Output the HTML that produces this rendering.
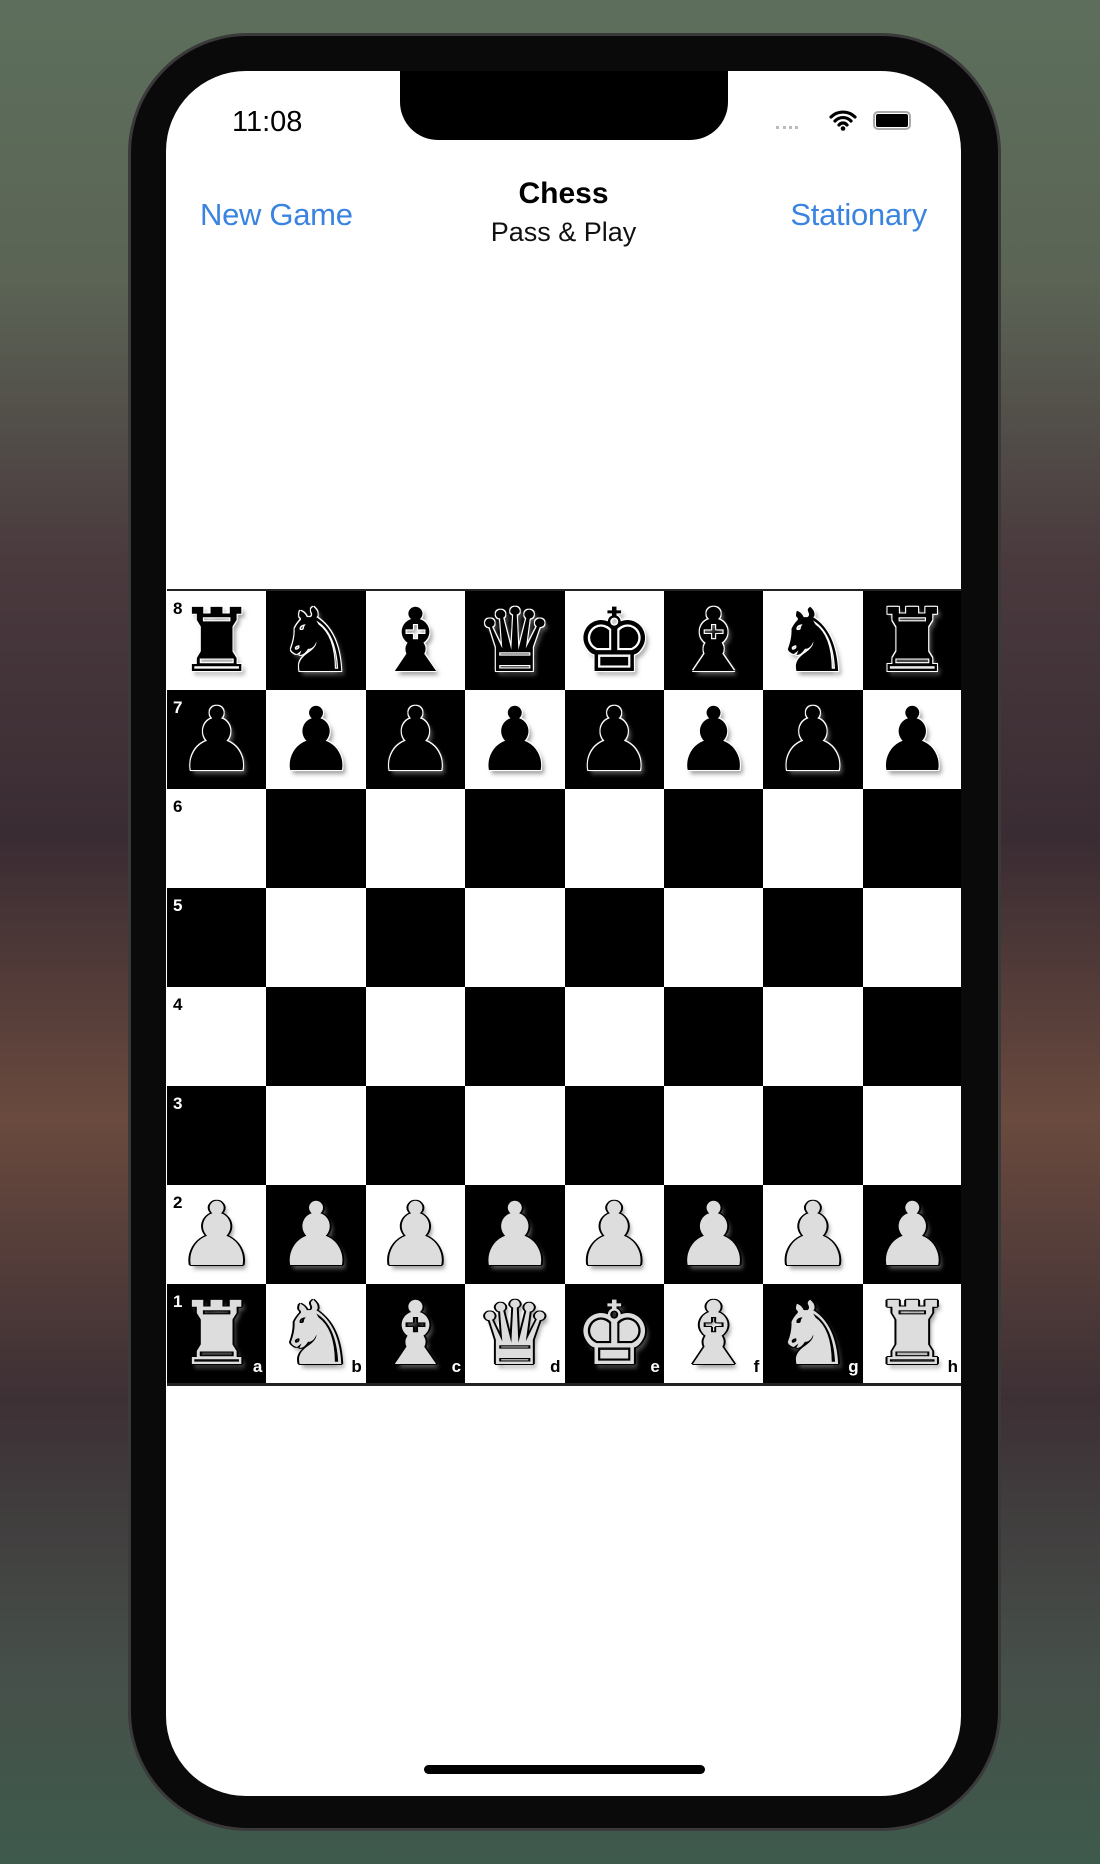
<!DOCTYPE html>
<html><head><meta charset="utf-8"><style>
*{margin:0;padding:0;box-sizing:border-box}
body{width:1100px;height:1864px;overflow:hidden;position:relative;font-family:"Liberation Sans",sans-serif;
background:linear-gradient(180deg,#5d6f5c 0%,#5b6455 15%,#4a3a3e 30%,#3a2c33 45%,#6a4a3e 60%,#3d3035 75%,#46504a 90%,#3e5a4c 100%);}
.phone{position:absolute;left:128px;top:33px;width:873px;height:1798px;background:#0a0a0a;border-radius:120px;border:3px solid #3a3a3a}
.screen{position:absolute;left:166px;top:71px;width:795px;height:1725px;background:#fff;border-radius:80px;overflow:hidden}
.notch{position:absolute;left:234px;top:-2px;width:328px;height:71px;background:#000;border-radius:0 0 38px 38px}
.t{position:absolute;white-space:nowrap}
.board{position:absolute;left:1px;top:518px;width:795px;height:797px;display:grid;grid-template-columns:repeat(8,1fr);grid-template-rows:repeat(8,1fr);border-top:2px solid #222;border-bottom:3px solid #222}
.sq{position:relative;display:flex;align-items:center;justify-content:center;font-family:"DejaVu Sans",sans-serif;font-size:88px;line-height:1}
.l{background:#fff}.d{background:#000}
.bp{color:#000;text-shadow:0 0 2px #fff,1px 1px 0 #fff,-1px -1px 0 #fff,1px -1px 0 #fff,-1px 1px 0 #fff,3px 4px 4px rgba(120,120,120,.7)}
.wp{color:#ddd;text-shadow:1px 1px 0 #000,-1px -1px 0 #000,1px -1px 0 #000,-1px 1px 0 #000,2px 0 0 #000,-2px 0 0 #000,3px 4px 4px rgba(120,120,120,.7)}
.rk{position:absolute;left:6px;top:8px;font:bold 17px "Liberation Sans",sans-serif}
.fl{position:absolute;right:4px;bottom:6px;font:bold 17px "Liberation Sans",sans-serif}
.l .rk,.l .fl{color:#000}.d .rk,.d .fl{color:#fff}
</style></head><body>
<div class="phone"></div>
<div class="screen">
<div class="notch"></div>
<div class="t" style="left:66px;top:35px;font-size:29px;color:#000">11:08</div>
<div class="t" style="left:610px;top:55px;width:22px;height:3px;border-top:3px dotted #bbb"></div>
<svg class="t" style="left:663px;top:38px" width="28" height="22" viewBox="0 0 28 22"><path d="M2 8a17 17 0 0 1 24 0M6 12a11 11 0 0 1 16 0M10 16a5 5 0 0 1 8 0" stroke="#000" stroke-width="3.2" fill="none" stroke-linecap="round"/><circle cx="14" cy="19.5" r="2.3"/></svg>
<div class="t" style="left:707px;top:40px;width:38px;height:19px;border:2px solid #aaa;border-radius:5px;padding:1px"><div style="width:100%;height:100%;background:#000;border-radius:2px"></div></div>
<div class="t" style="left:34px;top:126px;font-size:31px;color:#3a84e0;letter-spacing:-0.3px">New Game</div>
<div class="t" style="left:0;width:795px;text-align:center;top:106px;font-size:30px;font-weight:bold;color:#000">Chess</div>
<div class="t" style="left:0;width:795px;text-align:center;top:146px;font-size:27px;color:#111">Pass &amp; Play</div>
<div class="t" style="right:34px;top:126px;font-size:31px;color:#3a84e0;letter-spacing:-0.3px">Stationary</div>
<div class="board">
<div class="sq l"><span class="rk">8</span><span class="bp">♜</span></div><div class="sq d"><span class="bp">♞</span></div><div class="sq l"><span class="bp">♝</span></div><div class="sq d"><span class="bp">♛</span></div><div class="sq l"><span class="bp">♚</span></div><div class="sq d"><span class="bp">♝</span></div><div class="sq l"><span class="bp">♞</span></div><div class="sq d"><span class="bp">♜</span></div>
<div class="sq d"><span class="rk">7</span><span class="bp">♟</span></div><div class="sq l"><span class="bp">♟</span></div><div class="sq d"><span class="bp">♟</span></div><div class="sq l"><span class="bp">♟</span></div><div class="sq d"><span class="bp">♟</span></div><div class="sq l"><span class="bp">♟</span></div><div class="sq d"><span class="bp">♟</span></div><div class="sq l"><span class="bp">♟</span></div>
<div class="sq l"><span class="rk">6</span></div><div class="sq d"></div><div class="sq l"></div><div class="sq d"></div><div class="sq l"></div><div class="sq d"></div><div class="sq l"></div><div class="sq d"></div>
<div class="sq d"><span class="rk">5</span></div><div class="sq l"></div><div class="sq d"></div><div class="sq l"></div><div class="sq d"></div><div class="sq l"></div><div class="sq d"></div><div class="sq l"></div>
<div class="sq l"><span class="rk">4</span></div><div class="sq d"></div><div class="sq l"></div><div class="sq d"></div><div class="sq l"></div><div class="sq d"></div><div class="sq l"></div><div class="sq d"></div>
<div class="sq d"><span class="rk">3</span></div><div class="sq l"></div><div class="sq d"></div><div class="sq l"></div><div class="sq d"></div><div class="sq l"></div><div class="sq d"></div><div class="sq l"></div>
<div class="sq l"><span class="rk">2</span><span class="wp">♟</span></div><div class="sq d"><span class="wp">♟</span></div><div class="sq l"><span class="wp">♟</span></div><div class="sq d"><span class="wp">♟</span></div><div class="sq l"><span class="wp">♟</span></div><div class="sq d"><span class="wp">♟</span></div><div class="sq l"><span class="wp">♟</span></div><div class="sq d"><span class="wp">♟</span></div>
<div class="sq d"><span class="rk">1</span><span class="wp">♜</span><span class="fl">a</span></div><div class="sq l"><span class="wp">♞</span><span class="fl">b</span></div><div class="sq d"><span class="wp">♝</span><span class="fl">c</span></div><div class="sq l"><span class="wp">♛</span><span class="fl">d</span></div><div class="sq d"><span class="wp">♚</span><span class="fl">e</span></div><div class="sq l"><span class="wp">♝</span><span class="fl">f</span></div><div class="sq d"><span class="wp">♞</span><span class="fl">g</span></div><div class="sq l"><span class="wp">♜</span><span class="fl">h</span></div>
</div>
<div class="t" style="left:258px;top:1694px;width:281px;height:9px;background:#000;border-radius:5px"></div>
</div>
</body></html>
